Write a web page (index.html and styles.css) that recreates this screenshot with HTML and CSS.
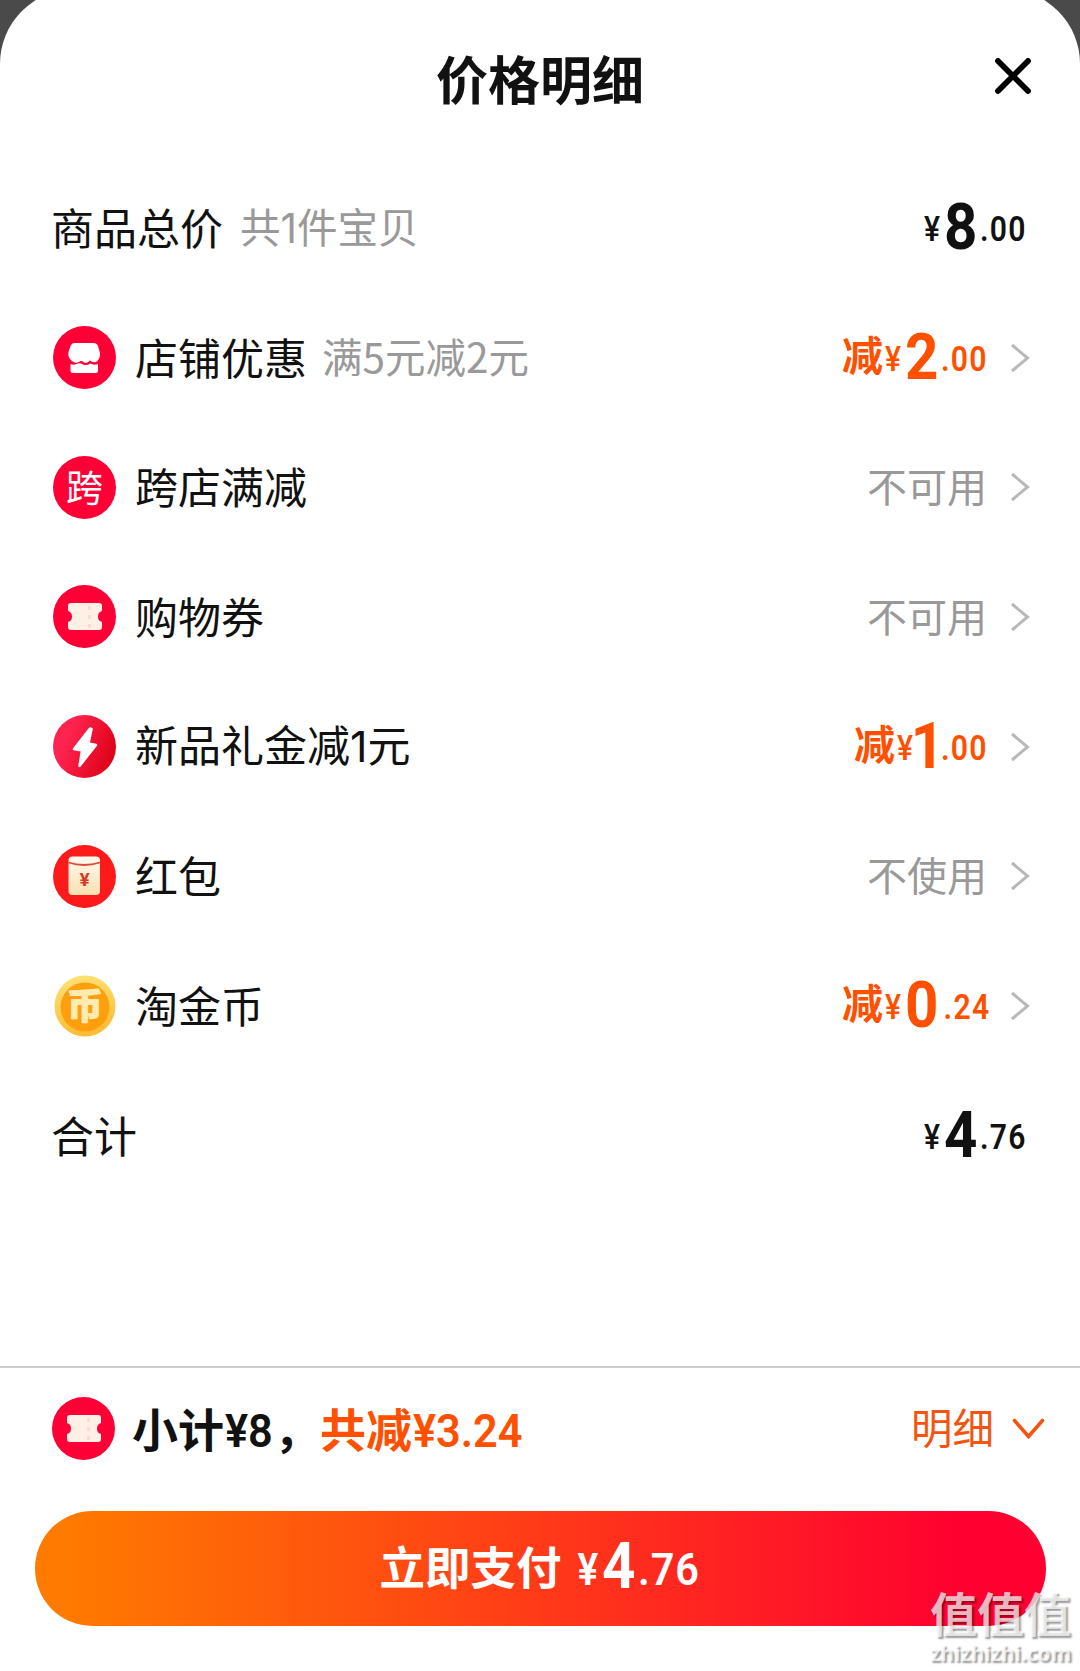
FILE: index.html
```html
<!DOCTYPE html>
<html lang="zh-CN">
<head>
  <meta charset="UTF-8">
  <meta name="viewport" content="width=device-width, initial-scale=1.0">
  <title>价格明细</title>
  <link rel="stylesheet" href="styles.css">
</head>
<body>
  <!-- Shared shapes -->
  <svg class="defs" width="0" height="0">
    <symbol id="arrow" viewBox="0 0 20 30">
      <path d="M2 2 L17.5 15 L2 28" fill="none" stroke="#b8b8b8" stroke-width="3"/>
    </symbol>
    <symbol id="ticket" viewBox="0 0 63 63">
      <circle cx="31.5" cy="31.5" r="31.5" fill="#ff0036"/>
      <path d="M18 18 H46 Q49 18 49 21 V26 Q45 27 45 31.5 Q45 36 49 37 V42 Q49 45 46 45 H18 Q15 45 15 42 V37 Q19 36 19 31.5 Q19 27 15 26 V21 Q15 18 18 18 Z" fill="#fff0e6"/>
      <path d="M36.5 21 V44" stroke="#fbdcd2" stroke-width="3" stroke-dasharray="4 5"/>
    </symbol>
  </svg>

  <div class="sheet">
    <header class="header">
      <h1>价格明细</h1>
      <button class="close">
        <svg width="36" height="36" viewBox="0 0 36 36">
          <path d="M3 3 L33 33 M33 3 L3 33" stroke="#000" stroke-width="5.8" stroke-linecap="round"/>
        </svg>
      </button>
    </header>

    <!-- Price rows -->
    <div class="rows">
      <div class="row">
        <span class="label">商品总价</span>
        <span class="hint">共<b class="one">1</b>件宝贝</span>
        <div class="price"><span class="yen">¥</span><span class="int">8</span><span class="dec">.00</span></div>
      </div>

      <div class="row">
        <svg class="icon" viewBox="0 0 63 63">
          <circle cx="31.5" cy="31.5" r="31.5" fill="#ff0036"/>
          <path d="M22 17 H40 Q44 17 45 20 L47 27 Q47.500 33 43 36 Q39.500 37 37 34.500 Q34 38 31 36.500 Q28 34 26 36 Q22 38 19 35 Q14.500 32 15.500 26 L17.500 20 Q18.500 17 22 17 Z" fill="#fff"/>
          <path d="M17.500 38 Q21 39.500 25 37.500 Q28 36.500 31 39 Q35 39.500 37 37.500 Q41 39.500 45 38 V44.500 Q45 47 42.500 47 H20 Q17.500 47 17.500 44.500 Z" fill="#fff"/>
        </svg>
        <span class="label">店铺优惠</span>
        <span class="hint">满<b>5</b>元减<b>2</b>元</span>
        <div class="price off"><span class="cut">减</span><span class="yen">¥</span><span class="int">2</span><span class="dec">.00</span></div>
        <svg class="arrow"><use href="#arrow"/></svg>
      </div>

      <div class="row">
        <span class="icon kua">跨</span>
        <span class="label">跨店满减</span>
        <span class="state">不可用</span>
        <svg class="arrow"><use href="#arrow"/></svg>
      </div>

      <div class="row">
        <svg class="icon"><use href="#ticket"/></svg>
        <span class="label">购物券</span>
        <span class="state">不可用</span>
        <svg class="arrow"><use href="#arrow"/></svg>
      </div>

      <div class="row">
        <svg class="icon" viewBox="0 0 63 63">
          <defs>
            <linearGradient id="bolt" x1="0" y1="0.3" x2="1" y2="0.7">
              <stop offset="0.2" stop-color="#ff2450"/>
              <stop offset="1" stop-color="#dc0014"/>
            </linearGradient>
          </defs>
          <circle cx="31.5" cy="31.5" r="31.5" fill="url(#bolt)"/>
          <path d="M37 13.500 L21 34 L29 35.500 L26.500 51 L43 30 L35.500 28.500 L38.500 14 Z" fill="#fff" stroke="#fff" stroke-width="2.500" stroke-linejoin="round"/>
        </svg>
        <span class="label">新品礼金减<b class="one">1</b>元</span>
        <div class="price off"><span class="cut">减</span><span class="yen">¥</span><span class="int slim">1</span><span class="dec">.00</span></div>
        <svg class="arrow"><use href="#arrow"/></svg>
      </div>

      <div class="row">
        <svg class="icon" viewBox="0 0 63 63">
          <defs>
            <linearGradient id="packet" x1="0" y1="0" x2="0" y2="1">
              <stop offset="0" stop-color="#fffaf0"/>
              <stop offset="1" stop-color="#ffe0b0"/>
            </linearGradient>
          </defs>
          <circle cx="31.5" cy="31.5" r="31.5" fill="#fc1a1a"/>
          <rect x="15.500" y="11.500" width="31.500" height="38.500" rx="4" fill="url(#packet)"/>
          <path d="M15.500 17.500 Q31 22.500 47 17.500" fill="none" stroke="#e04a38" stroke-width="1.800"/>
          <text class="packet-yen" x="31.500" y="41">¥</text>
        </svg>
        <span class="label">红包</span>
        <span class="state">不使用</span>
        <svg class="arrow"><use href="#arrow"/></svg>
      </div>

      <div class="row">
        <svg class="icon" viewBox="0 0 63 63">
          <defs>
            <linearGradient id="rim" x1="0" y1="0" x2="0.200" y2="1">
              <stop offset="0" stop-color="#ffe478"/>
              <stop offset="1" stop-color="#fcbc38"/>
            </linearGradient>
          </defs>
          <circle cx="32" cy="32" r="30.500" fill="url(#rim)"/>
          <circle cx="32" cy="33" r="24.500" fill="#ff9f0e"/>
          <text class="coin-text" x="32" y="45">币</text>
        </svg>
        <span class="label">淘金币</span>
        <div class="price off"><span class="cut">减</span><span class="yen">¥</span><span class="int">0</span><span class="dec wide">.24</span></div>
        <svg class="arrow"><use href="#arrow"/></svg>
      </div>

      <div class="row">
        <span class="label">合计</span>
        <div class="price"><span class="yen">¥</span><span class="int">4</span><span class="dec">.76</span></div>
      </div>
    </div>

    <!-- Bottom bar -->
    <footer class="footer">
      <div class="summary">
        <svg class="icon"><use href="#ticket"/></svg>
        <div class="subtotal">小计<b class="sum">¥8</b>，<span class="saved">共减<b>¥3.24</b></span></div>
        <span class="detail">明细</span>
        <svg class="down" width="33" height="22" viewBox="0 0 33 22">
          <path d="M2.500 2.500 L16.500 18.500 L30.500 2.500" fill="none" stroke="#f55410" stroke-width="3.600" stroke-linecap="round"/>
        </svg>
      </div>
      <button class="pay">
        <span class="pay-label">立即支付</span>
        <span class="yen">¥</span><span class="int">4</span><span class="dec">.76</span>
      </button>
    </footer>
  </div>

  <div class="watermark">
    <div class="mark">值值值</div>
    <div class="site">zhizhizhi.com</div>
  </div>
</body>
</html>
```
FILE: styles.css
```css
* {
  box-sizing: border-box;
}

body {
  margin: 0;
  width: 1080px;
  height: 1671px;
  overflow: hidden;
  position: relative;
  background-color: #4a4a4a;
  color: #111;
  font-family: "Noto Sans CJK SC", sans-serif;
}

.defs {
  position: absolute;
}

b {
  font-weight: inherit;
}

button {
  border: none;
  padding: 0;
  background: none;
  color: inherit;
  font-family: inherit;
}

/* Sheet runs a little above the top edge */
.sheet {
  display: flex;
  flex-direction: column;
  height: 1682px;
  margin-top: -11px;
  background-color: #fff;
  border-radius: 75px 75px 0 0;
}

.header {
  display: flex;
  align-items: flex-start;
  height: 174px;
  padding: 59px 49px 0 85px;
}

h1 {
  flex: 1;
  margin: 0;
  font-size: 52px;
  line-height: 60px;
  font-weight: 700;
  text-align: center;
}

.close {
  width: 36px;
  height: 36px;
  margin-top: 10px;
}

.close svg {
  display: block;
}

/* Rows */
.rows {
  display: grid;
  grid-template-rows: repeat(8, 129.7px);
}

.row {
  display: flex;
  align-items: center;
  padding: 0 50px 0 53px;
}

.icon {
  display: block;
  flex: none;
  width: 63px;
  height: 63px;
  margin-right: 19px;
}

.kua {
  background-color: #ff0036;
  border-radius: 50%;
  color: #fff;
  font-size: 37px;
  line-height: 60px;
  text-align: center;
}

.label {
  font-size: 43px;
  line-height: 60px;
  margin-top: -4px;
}

.row:first-child .label,
.row:last-child .label {
  margin-left: -2px;
}

.hint {
  margin-left: 15px;
  margin-top: -3px;
  color: #999;
  font-size: 40.500px;
  line-height: 60px;
}

.row:first-child .hint {
  margin-left: 17px;
  margin-top: -1px;
}

.one {
  font-family: Inter, sans-serif;
}

.state {
  margin-left: auto;
  color: #999;
  font-size: 40px;
  line-height: 60px;
  margin-top: -4px;
}

.arrow {
  width: 20px;
  height: 30px;
  margin-left: 23px;
}

/* Amounts: narrow numerals with a large integer part */
.price {
  display: flex;
  align-items: baseline;
  margin-left: auto;
  margin-top: -5px;
  line-height: 60px;
}

.off {
  margin-right: -4px;
  color: #ff5000;
}

.cut {
  width: 43px;
  font-size: 41px;
  font-weight: 700;
}

.yen,
.int,
.dec {
  font-family: Roboto, sans-serif;
  transform: scaleX(0.86);
  transform-origin: left;
  white-space: nowrap;
}

.yen {
  width: 20px;
  font-size: 35px;
  font-weight: 500;
}

.int {
  position: relative;
  top: 8px;
  width: 36px;
  font-size: 64px;
  font-weight: 700;
  transform: scaleX(0.91);
}

.slim {
  width: 24px;
  text-indent: -7px;
}

.dec {
  width: 50px;
  font-size: 35px;
  font-weight: 600;
  letter-spacing: 1.500px;
}

.wide {
  text-indent: 3px;
}

/* Bottom bar */
.footer {
  margin-top: auto;
  height: 305px;
  border-top: 2px solid #ccc;
  padding: 29px 34px 0 35px;
}

.summary {
  display: flex;
  align-items: center;
  height: 63px;
  padding: 0 1px 0 17px;
}

.summary .icon {
  margin-right: 17px;
}

.subtotal {
  display: flex;
  align-items: baseline;
  font-size: 46px;
  line-height: 60px;
  font-weight: 700;
}

.subtotal b {
  width: 112px;
  font-family: Roboto, sans-serif;
  font-weight: 600;
  text-indent: 1px;
  transform: scaleX(0.94);
  transform-origin: left;
}

.subtotal .sum {
  width: 50px;
}

.saved {
  display: flex;
  align-items: baseline;
  color: #ff5000;
}

.detail {
  margin-left: auto;
  margin-top: -5px;
  color: #f55410;
  font-size: 41.500px;
  line-height: 60px;
}

.down {
  margin-left: 18px;
}

.pay {
  display: flex;
  align-items: baseline;
  width: 1011px;
  height: 115px;
  margin-top: 51px;
  padding-left: 343px;
  border-radius: 58px;
  background: linear-gradient(90deg, #ff7a00 3%, #ff3a18 50%, #ff0030 92%);
  color: #fff;
  line-height: 106px;
}

.pay-label {
  width: 199px;
  margin-left: -7px;
  margin-right: 7px;
  font-size: 45.500px;
  font-weight: 700;
}

.pay .yen {
  width: 25px;
  font-size: 45px;
  font-weight: 600;
}

.pay .int {
  width: 36px;
  top: 3px;
}

.pay .dec {
  font-size: 45px;
  letter-spacing: 1px;
  transform: scaleX(0.92);
}

.packet-yen {
  fill: #d63a28;
  font-family: Roboto, sans-serif;
  font-size: 19px;
  font-weight: 700;
  text-anchor: middle;
}

.coin-text {
  fill: #ffeab0;
  stroke: #ffeab0;
  stroke-width: 2px;
  stroke-linejoin: round;
  font-size: 35px;
  font-weight: 700;
  text-anchor: middle;
}

/* Site mark over the bottom right corner */
.watermark {
  position: absolute;
  right: 8px;
  bottom: 6px;
  width: 142px;
  color: rgba(255, 255, 255, 0.72);
  text-shadow: 2px 2px 2px rgba(0, 0, 0, 0.4);
  white-space: nowrap;
}

.mark {
  font-size: 47px;
  line-height: 52px;
  margin-bottom: 3px;
  font-weight: 700;
}

.site {
  font-family: "Noto Sans", sans-serif;
  font-size: 21px;
  line-height: 24px;
  font-weight: 700;
}
```
